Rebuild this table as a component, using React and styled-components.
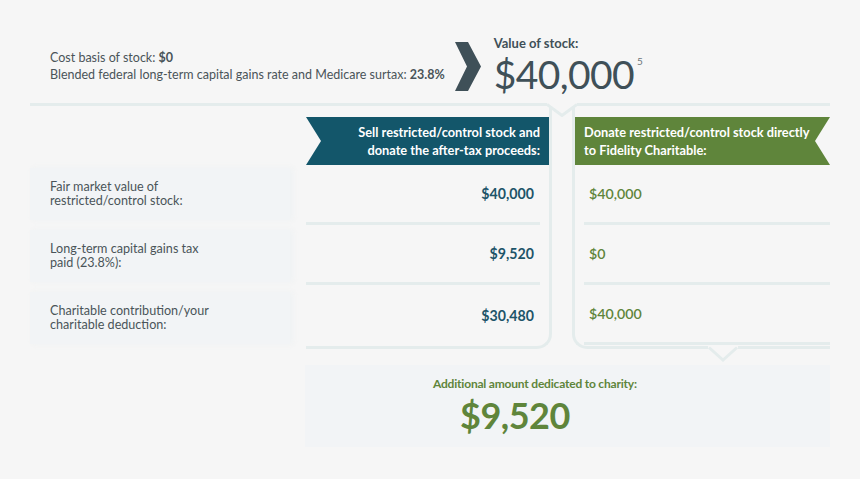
import React from "react";
import styled, { createGlobalStyle } from "styled-components";

const GlobalStyle = createGlobalStyle`
  html, body { margin: 0; padding: 0; background: #f6f6f6; }
  body { font-family: Lato, "Open Sans", "Liberation Sans", sans-serif; }
`;

const LINE = "#e4ecec";
const TEAL = "#13566a";
const GREEN = "#5f853b";
const INK = "#4a5459";
const BG = "#f6f6f6";

const Page = styled.div`
  width: 860px;
  height: 479px;
  padding: 0 30px;
  box-sizing: border-box;
  background: ${BG};
  overflow: hidden;
`;

const Header = styled.header`
  display: flex;
  align-items: center;
  height: 73px;
  padding-top: 30px;
  padding-left: 20px;
`;

const Facts = styled.div`
  font-size: 12.5px;
  line-height: 17px;
  color: ${INK};
  white-space: nowrap;
  margin-top: -1px;
`;

const Strong = styled.b`
  font-weight: 700;
`;

const Chevron = styled.svg`
  flex-shrink: 0;
  margin-left: 10px;
  margin-right: 13px;
`;

const ValueBlock = styled.div`
  display: flex;
  flex-direction: column;
  color: #3f5058;
`;

const ValueLabel = styled.div`
  font-size: 13px;
  font-weight: 700;
  line-height: 16px;
`;

const ValueRow = styled.div`
  display: flex;
  align-items: flex-start;
`;

const BigValue = styled.span`
  font-size: 39px;
  line-height: 47px;
  font-weight: 400;
  letter-spacing: -0.6px;
`;

const Note = styled.span`
  font-size: 10px;
  line-height: 10px;
  color: #6b757a;
  margin-left: 3px;
  margin-top: 5px;
`;

const Rule = styled.div`
  display: flex;
  align-items: flex-start;
  height: 3px;
`;

const RuleLine = styled.div`
  height: 3px;
  background: ${LINE};
  flex: ${(p) => (p.$grow ? "1" : "none")};
  width: ${(p) => (p.$w ? `${p.$w}px` : "auto")};
`;

const Notch = styled.svg`
  flex-shrink: 0;
  display: block;
`;

const Compare = styled.section`
  display: flex;
  align-items: stretch;
`;

const LabelCol = styled.div`
  width: 260px;
  padding-top: 62px;
  display: flex;
  flex-direction: column;
  gap: 10px;
`;

const LabelCard = styled.div`
  height: 52px;
  display: flex;
  align-items: center;
  padding-left: 20px;
  background: #f2f4f6;
  box-shadow: 3px 0 5px rgba(238, 241, 243, 0.8);
  font-size: 12.6px;
  line-height: 14.5px;
  color: ${INK};
`;

const OptionCol = styled.div`
  position: relative;
  padding-top: 11px;
  display: flex;
  flex-direction: column;
  border-bottom: 3px solid ${LINE};
  ${(p) =>
    p.$side === "left"
      ? `
    width: 243px;
    margin-left: 16px;
    border-right: 3px solid ${LINE};
    border-bottom-right-radius: 15px;
  `
      : `
    width: 255px;
    margin-left: 20px;
    border-left: 3px solid ${LINE};
    border-bottom-left-radius: 15px;
  `}
`;

const Flag = styled.div`
  height: 48px;
  box-sizing: border-box;
  display: flex;
  flex-direction: column;
  justify-content: center;
  color: #fff;
  font-size: 12.8px;
  font-weight: 700;
  line-height: 18px;
  white-space: nowrap;
  background: ${(p) => (p.$tone === "teal" ? TEAL : GREEN)};
  ${(p) =>
    p.$tone === "teal"
      ? `
    text-align: right;
    padding-right: 9px;
    clip-path: polygon(0 0, 100% 0, 100% 100%, 0 100%, 15px 50%);
  `
      : `
    text-align: left;
    padding-left: 9px;
    clip-path: polygon(0 0, 100% 0, calc(100% - 15px) 50%, 100% 100%, 0 100%);
  `}
`;

const Cell = styled.div`
  height: 57px;
  display: flex;
  align-items: center;
  border-bottom: 3px solid ${LINE};
  font-size: 14.2px;
  ${(p) =>
    p.$tone === "teal"
      ? `
    justify-content: flex-end;
    margin-right: 9px;
    padding-right: 6px;
    color: #1d5469;
    font-weight: 700;
  `
      : `
    justify-content: flex-start;
    margin-left: 9px;
    padding-left: 5px;
    color: ${GREEN};
    font-weight: 600;
  `}
  &:last-child {
    border-bottom: none;
    height: 61px;
  }
`;

const BottomNotch = styled.svg`
  position: absolute;
  left: 133px;
  top: 100%;
  display: block;
`;

const Result = styled.section`
  margin-top: 16px;
  margin-left: 275px;
  width: 525px;
  height: 82px;
  box-sizing: border-box;
  background: #f2f4f6;
  padding-top: 11px;
  padding-left: 128px;
  display: flex;
  flex-direction: column;
  align-items: flex-start;
  color: ${GREEN};
`;

const ResultLabel = styled.div`
  font-size: 12px;
  font-weight: 700;
  line-height: 16px;
  letter-spacing: -0.2px;
`;

const ResultValue = styled.div`
  margin-top: 3px;
  margin-left: 27px;
  font-size: 36px;
  line-height: 40px;
  font-weight: 700;
  letter-spacing: -0.5px;
`;

const labels = [
  ["Fair market value of", "restricted/control stock:"],
  ["Long-term capital gains tax", "paid (23.8%):"],
  ["Charitable contribution/your", "charitable deduction:"],
];
const sell = ["$40,000", "$9,520", "$30,480"];
const donate = ["$40,000", "$0", "$40,000"];

export default function App() {
  return (
    <Page>
      <GlobalStyle />
      <Header>
        <Facts>
          Cost basis of stock: <Strong>$0</Strong>
          <br />
          Blended federal long-term capital gains rate and Medicare surtax:{" "}
          <Strong>23.8%</Strong>
        </Facts>
        <Chevron width="26" height="49" viewBox="0 0 26 49">
          <polygon points="0,0 13,0 26,24.5 13,49 0,49 12,24.5" fill="#3f5058" />
        </Chevron>
        <ValueBlock>
          <ValueLabel>Value of stock:</ValueLabel>
          <ValueRow>
            <BigValue>$40,000</BigValue>
            <Note>5</Note>
          </ValueRow>
        </ValueBlock>
      </Header>

      <Rule>
        <RuleLine $w={517} />
        <Notch width="30" height="14" viewBox="0 0 30 14">
          <polyline points="0,1.5 15,12.5 30,1.5" fill="none" stroke={LINE} strokeWidth="3" />
        </Notch>
        <RuleLine $grow />
      </Rule>

      <Compare>
        <LabelCol>
          {labels.map((l, i) => (
            <LabelCard key={i}>
              <div>
                {l[0]}
                <br />
                {l[1]}
              </div>
            </LabelCard>
          ))}
        </LabelCol>
        <OptionCol $side="left">
          <Flag $tone="teal">
            <span>Sell restricted/control stock and</span>
            <span>donate the after-tax proceeds:</span>
          </Flag>
          {sell.map((v, i) => (
            <Cell key={i} $tone="teal">{v}</Cell>
          ))}
        </OptionCol>
        <OptionCol $side="right">
          <Flag $tone="green">
            <span>Donate restricted/control stock directly</span>
            <span>to Fidelity Charitable:</span>
          </Flag>
          {donate.map((v, i) => (
            <Cell key={i} $tone="green">{v}</Cell>
          ))}
          <BottomNotch width="30" height="16" viewBox="0 0 30 16">
            <rect x="0" y="0" width="30" height="3" fill={BG} />
            <polyline points="1,1.5 15,14 29,1.5" fill="none" stroke={LINE} strokeWidth="3" />
          </BottomNotch>
        </OptionCol>
      </Compare>

      <Result>
        <ResultLabel>Additional amount dedicated to charity:</ResultLabel>
        <ResultValue>$9,520</ResultValue>
      </Result>
    </Page>
  );
}
